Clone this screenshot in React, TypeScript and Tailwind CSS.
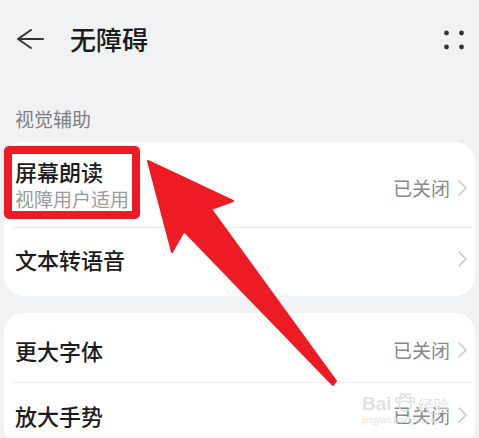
import { ReactNode } from "react";

const font = { fontFamily: '"Noto Sans CJK SC", "Noto Sans", sans-serif' };
const latin = { fontFamily: '"Liberation Sans", sans-serif' };

function Chevron() {
  return (
    <svg width="11" height="16" viewBox="0 0 11 16" className="ml-[7px] shrink-0">
      <polyline
        points="2,1 9,8 2,15"
        fill="none"
        stroke="#c9c9c9"
        strokeWidth="1.6"
        strokeLinecap="round"
        strokeLinejoin="round"
      />
    </svg>
  );
}

function Status({ value }: { value?: string }) {
  return (
    <div className="flex items-center pr-[7px]">
      {value && <span className="text-[19px] leading-[26px] text-[#888]">{value}</span>}
      <Chevron />
    </div>
  );
}

function Divider() {
  return <div className="ml-[8px] mr-[3px] h-px bg-[#ececec]" />;
}

function Card({ children, className }: { children: ReactNode; className?: string }) {
  return <div className={"mx-[4px] rounded-[20px] bg-white " + (className ?? "")}>{children}</div>;
}

export default function App() {
  return (
    <div className="relative h-[438px] w-[479px] overflow-hidden bg-[#f1f2f4]" style={font}>
      {/* header */}
      <div className="flex h-[80px] items-center justify-between pb-[3px]">
        <div className="flex items-center">
          <svg width="30" height="24" viewBox="0 0 30 24" className="ml-[15px]">
            <path
              d="M3 12 H28 M3 12 L16 3 M3 12 L16 21"
              fill="none"
              stroke="#333"
              strokeWidth="2"
              strokeLinecap="round"
            />
          </svg>
          <h1 className="ml-[25px] text-[26px] font-medium leading-[34px] text-[#1c1c1c]">无障碍</h1>
        </div>
        <svg width="24" height="24" viewBox="0 0 24 24" className="mr-[13px] mt-[2px]">
          <circle cx="4.5" cy="5" r="2.4" fill="#333" />
          <circle cx="19.5" cy="5" r="2.4" fill="#333" />
          <circle cx="4.5" cy="19" r="2.4" fill="#333" />
          <circle cx="19.5" cy="19" r="2.4" fill="#333" />
        </svg>
      </div>

      {/* section label */}
      <div className="h-[62px] pl-[15px] pt-[26px] text-[19px] leading-[26px] text-[#7f7f7f]">视觉辅助</div>

      <Card className="pb-[6px]">
        <div className="flex h-[85px] items-center justify-between">
          <div className="pl-[11px]">
            <div className="text-[22px] font-medium leading-[28px] text-[#1c1c1c]">屏幕朗读</div>
            <div className="text-[19px] leading-[28px] text-[#9a9a9a]">视障用户适用</div>
          </div>
          <div className="mt-[6px]">
            <Status value="已关闭" />
          </div>
        </div>
        <Divider />
        <div className="flex h-[62px] items-center justify-between">
          <div className="pl-[11px] text-[22px] font-medium leading-[28px] text-[#1c1c1c]">文本转语音</div>
          <Status />
        </div>
      </Card>

      <Card className="mt-[17px]">
        <div className="flex h-[69px] items-center justify-between pt-[5px]">
          <div className="pl-[11px] text-[22px] font-medium leading-[28px] text-[#1c1c1c]">更大字体</div>
          <Status value="已关闭" />
        </div>
        <Divider />
        <div className="flex h-[64px] items-center justify-between">
          <div className="pl-[11px] text-[22px] font-medium leading-[28px] text-[#1c1c1c]">放大手势</div>
          <Status value="已关闭" />
        </div>
      </Card>

      {/* annotation: red box */}
      <div className="absolute left-[4px] top-[146px] h-[73px] w-[136px] rounded-[5px] border-[8px] border-[#ed1c24]" />

      {/* annotation: red arrow */}
      <svg className="absolute left-0 top-0" width="479" height="438" viewBox="0 0 479 438">
        <polygon
          points="148,161 233,201 211,209 336,381 333,385 184,231 172,252"
          fill="#ed1c24"
          stroke="#ed1c24"
          strokeWidth="2"
          strokeLinejoin="round"
        />
      </svg>

      {/* watermark */}
      <div className="pointer-events-none absolute left-[362px] top-[392px] text-[#e2e2e2]">
        <div className="flex items-end leading-none">
          <span className="text-[19px] font-bold" style={latin}>Bai</span>
          <svg width="24" height="20" viewBox="0 0 24 20" className="mx-[1px] mb-[1px]">
            <g fill="none" stroke="#e0e0e0" strokeWidth="1.5">
              <ellipse cx="12" cy="14" rx="6" ry="5" />
              <circle cx="5" cy="8" r="2.2" />
              <circle cx="9.5" cy="4" r="2.2" />
              <circle cx="15" cy="4" r="2.2" />
              <circle cx="19.5" cy="8" r="2.2" />
            </g>
          </svg>
          <span className="text-[16px]" style={font}>经验</span>
        </div>
        <div className="mt-[3px] text-[9px] leading-none" style={latin}>jingyan.baidu.com</div>
      </div>
    </div>
  );
}
